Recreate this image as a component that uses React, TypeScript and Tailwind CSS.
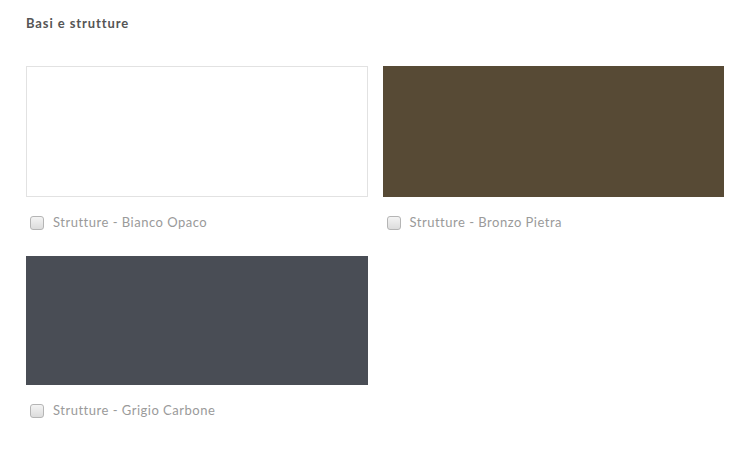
import { type FC } from 'react';

const FINISHES = [
  { name: 'Strutture - Bianco Opaco', color: 'h-[131px] bg-white border border-[#e2e2e2]' },
  { name: 'Strutture - Bronzo Pietra', color: 'h-[131px] bg-[#574a35]' },
  { name: 'Strutture - Grigio Carbone', color: 'h-[129px] bg-[#494d55]' },
];

const FinishCard: FC<{ name: string; color: string }> = ({ name, color }) => (
  <div className="flex flex-col">
    <div className={`w-full ${color}`} />
    <label className="mt-[19px] flex items-center gap-[9px] pl-[4px] text-[13px] tracking-[0.5px] text-[#9a9a9a]">
      <span className="size-[14px] shrink-0 rounded-[3px] border border-[#b5b5b5] bg-gradient-to-b from-[#f4f4f4] to-[#dcdcdc]" />
      <span className="leading-none">{name}</span>
    </label>
  </div>
);

export default function App() {
  return (
    <div className="h-[450px] w-[751px] bg-white pl-[26px] pr-[27px] pt-[14px] font-['Lato','Liberation_Sans',sans-serif]">
      <h3 className="text-[13px] font-bold tracking-[0.9px] text-[#555]">Basi e strutture</h3>
      <div className="mt-[32px] grid grid-cols-2 gap-x-[15px] gap-y-[26px]">
        {FINISHES.map(f => (
          <FinishCard key={f.name} name={f.name} color={f.color} />
        ))}
      </div>
    </div>
  );
}
